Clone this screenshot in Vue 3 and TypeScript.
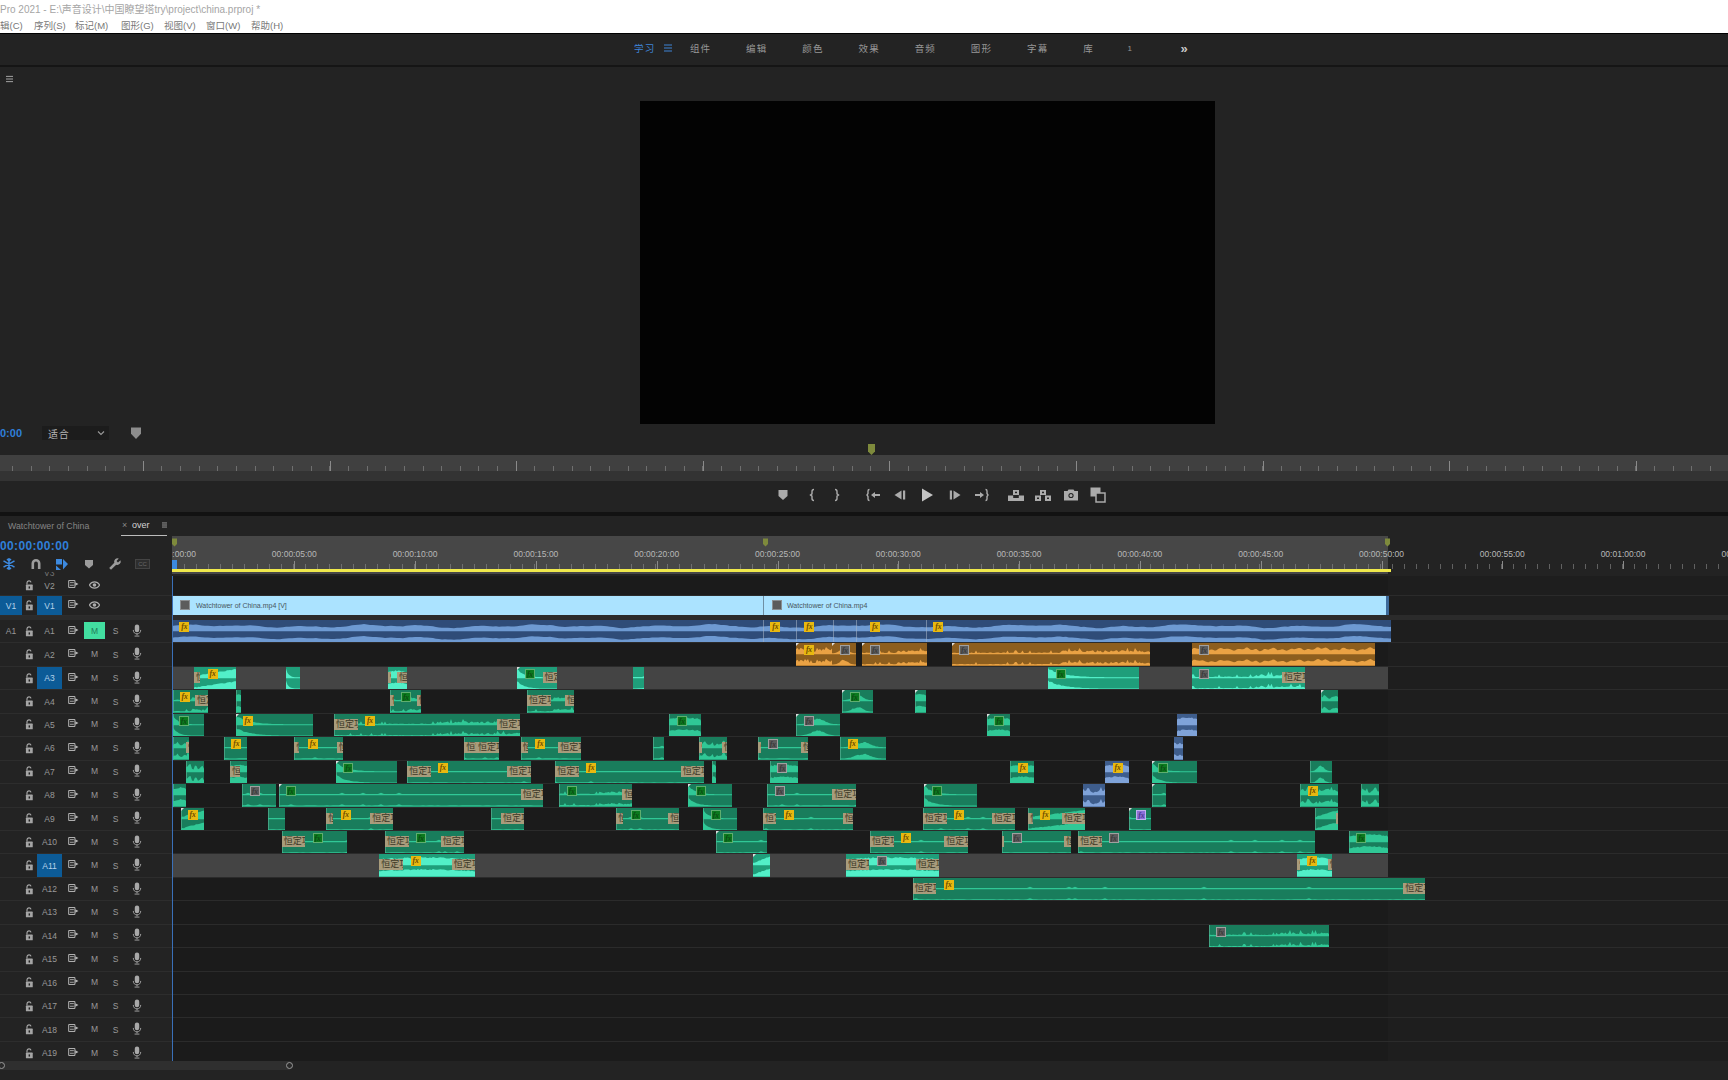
<script setup lang="ts">
type Clip = {
  s: number; e: number; k: string; badge: string; tl: number; tr: number; corner: boolean; col: string; d: string;
};

let seed = 7;
function rnd(): number {
  seed = (seed * 16807) % 2147483647;
  return (seed % 1000) / 1000;
}

let walk = 0.5;
function level(kind: string, t: number, n: number): number {
  switch (kind) {
    case 'd': return 0.08 + 0.9 * Math.exp(-6 * t) * (0.8 + 0.2 * n);
    case 'b': return 0.09 + 0.55 * Math.exp(-(((t - 0.5) / 0.22) ** 2)) * (0.7 + 0.3 * n);
    case 's': return 0.3 + 0.45 * n * n + 0.08 * Math.sin(t * 9);
    case 'h': return 0.5 + 0.12 * n + 0.15 * Math.sin(t * 3.14);
    case 'r': return 0.15 + 0.65 * t + 0.08 * n;
    case 'w':
      walk = walk * 0.7 + n * 0.3;
      return 0.36 + 0.22 * walk + 0.09 * Math.sin(t * 47) + 0.07 * Math.sin(t * 131);
    case 'n': return 0.09 + (t > 0.55 ? 0.22 : 0.05) * (0.4 + n) + (n > 0.9 ? 0.2 : 0);
    default: return 0.1 + (n > 0.93 ? 0.12 : 0.03 * n);
  }
}

function wave(w: number, kind: string): string {
  const step = kind === 'f' || w > 200 ? 3 : 1.5;
  const pts: number[] = [];
  for (let x = 0; x <= w + step; x += step) pts.push(Math.min(1, level(kind, x / w, rnd())));
  const chan = (base: number, scale: number): string =>
    `M0 ${base}` +
    pts.map((l, i) => `L${(i * step).toFixed(1)} ${(base - l * 10.5 * scale).toFixed(1)}`).join('') +
    `L${w + step} ${base}Z`;
  return chan(11, 1) + chan(22, 0.9);
}

function c(s: number, e: number, k = 'f', badge = '', tl = 0, tr = 0, corner = 0, col = ''): Clip {
  return { s, e, k, badge, tl, tr, corner: !!corner, col, d: wave(e - s, k) };
}

const laneClips: Record<string, Clip[]> = {
  A2: [
    c(796, 832, 's', 'y809', 0, 0, 1, 'o'), c(832, 856, 'b', 'k845', 0, 0, 1, 'o'),
    c(862, 927, 'n', 'k875', 0, 0, 1, 'o'), c(952, 1150, 'n', 'k964', 0, 0, 1, 'o'),
    c(1191.5, 1375, 'w', 'k1204', 0, 0, 0, 'o'),
  ],
  A3: [
    c(194, 236, 'r', 'y212.7', 6), c(285.7, 300, 'd'), c(388, 406.7, 'h', '', 3, 9.7),
    c(517, 557, 'd', 'g530', 0, 14.5, 1), c(632.7, 644), c(1048, 1138.7, 'd', 'g1060.7'),
    c(1191.5, 1305, 'n', 'k1204', 0, 23),
  ],
  A4: [
    c(172.5, 207.7, 'n', 'y184.7', 0, 12.7), c(235.7, 240.7, 'h'), c(390, 420.7, 'n', 'g406', 4, 4),
    c(527, 573.7, 'n', '', 23.7, 8.7), c(842, 873, 'b', 'g854.7', 0, 0, 1), c(915.3, 926, 'h', '', 0, 0, 1),
    c(1320.5, 1338, 's', '', 0, 0, 1),
  ],
  A5: [
    c(172.7, 203.7, 'd', 'g184'), c(235.7, 312.7, 'd', 'y247.7', 0, 0, 1), c(334, 520.3, 'n', 'y370', 23.7, 23),
    c(669.3, 700.7, 'h', 'g682'), c(796.3, 840, 'b', 'k809', 0, 0, 1), c(987, 1010, 'h', 'g999.3', 0, 0, 1),
    c(1177, 1197, 'h', '', 0, 0, 0, 'b'),
  ],
  A6: [
    c(172.7, 189, 's', '', 0, 3), c(223.7, 247.3, 'f', 'y236.3'), c(294.3, 343.3, 'f', 'y313', 5, 6.5),
    c(464.3, 499, 'f', '', 11.7, 23), c(520.7, 580.7, 'f', 'y540.3', 7.5, 22.4), c(653.3, 664.3),
    c(699.3, 727.3, 's', '', 3, 5.5), c(758.3, 808, 'f', 'k773', 3, 7), c(840, 886.3, 'b', 'y852.7'),
    c(1174, 1183.3, 's', '', 0, 0, 0, 'b'),
  ],
  A7: [
    c(186, 203.7, 's'), c(230, 247.3, 'h', '', 10), c(336, 397.3, 'd', 'g348.3', 0, 0, 1),
    c(407.3, 530.7, 'f', 'y443', 23.7, 23.4), c(555.3, 704, 'f', 'y591.3', 23.7, 23.3), c(712, 715.7, 'h'),
    c(769.7, 797.7, 'h', 'k782.3'), c(1010.3, 1034.3, 'h', 'y1023'), c(1105.3, 1128.7, 'h', 'y1117.7', 0, 0, 0, 'b'),
    c(1151.7, 1197, 'd', 'g1163.3', 0, 0, 1), c(1310, 1331.5, 'b'),
  ],
  A8: [
    c(172.7, 186.3, 'h'), c(242.3, 276, 'f', 'k255', 0, 0, 0), c(278.7, 543, 'f', 'g290.7', 0, 22.3, 1),
    c(559, 631.7, 'n', 'g571.7', 0, 9.4), c(688.3, 732, 'd', 'g700.7', 0, 0, 1), c(767.3, 855.7, 'f', 'k780', 0, 23.4),
    c(924.3, 976.7, 'd', 'g936.7', 0, 0, 1), c(1083.3, 1105, 's', '', 0, 0, 0, 'b'), c(1151.7, 1166, 'f', '', 0, 0, 1),
    c(1300, 1337.7, 's', 'y1312.7'), c(1361.3, 1379, 's'),
  ],
  A9: [
    c(180.7, 203.7, 'r', 'y192.7', 0, 0, 1), c(267.7, 285, 'f'), c(326.3, 393, 'f', 'y346', 7, 22.7),
    c(491, 524, 'f', '', 0, 23), c(616.3, 679.3, 'f', 'g636', 7, 11), c(703.3, 736.7, 'd', 'g716'),
    c(763, 853.3, 'f', 'y788.7', 13, 10.6), c(922.7, 1015, 'f', 'y958.7', 24, 23.3),
    c(1028.3, 1085.3, 'r', 'y1045.3', 5, 23.3), c(1129, 1151, 'f', 'p1141.3', 0, 0, 1), c(1315, 1337.7, 'r', '', 0, 2),
  ],
  A10: [
    c(281.7, 347, 'f', 'g317.7', 23.7), c(385, 464, 'f', 'g421', 24, 23.3), c(716, 767.3, 'f', 'g728.3', 0, 0, 1),
    c(870, 968, 'f', 'y906', 24, 23.7), c(1002.3, 1070.7, 'f', 'k1016.7', 2, 6.7), c(1078.3, 1315, 'f', 'k1113.7', 24),
    c(1349, 1387.7, 'h', 'g1361.3'),
  ],
  A11: [
    c(379.3, 475, 'h', 'y415.7', 24, 23.3), c(752.7, 770, 'r', '', 0, 0, 1), c(846, 939, 'h', 'k882', 23.3, 23.3),
    c(1297.3, 1332.3, 'h', 'y1312.3', 2.5, 4.5),
  ],
  A12: [c(912.7, 1425.3, 'f', 'y948.7', 23.3, 22)],
  A14: [c(1209, 1329, 'n', 'k1221')],
};

const audioNames: string[] = Array.from({ length: 19 }, (_, i) => `A${i + 1}`);
const selected = ['A3', 'A11'];

const a1 = { d: wave(1219, 'w'), dividers: [763, 796, 833, 856, 926], fx: [184.3, 775.3, 809.3, 875, 938.3] };

function px(x: number): string {
  return `${(x - 172).toFixed(1)}px`;
}
function clipBox(cl: Clip): Record<string, string> {
  return { left: px(cl.s), width: `${(cl.e - cl.s).toFixed(1)}px` };
}
function badgeKind(b: string): string {
  return `badge-${b[0]}`;
}
function badgeLeft(cl: Clip): string {
  return `${(Number(cl.badge.slice(1)) - cl.s - 5).toFixed(1)}px`;
}

const rulerLabels = Array.from({ length: 14 }, (_, i) => {
  const sec = i * 5;
  const mm = String(Math.floor(sec / 60)).padStart(2, '0');
  const ss = String(sec % 60).padStart(2, '0');
  return { text: `00:${mm}:${ss}:00`, x: 1.5 + i * 120.8 };
});

const menus = ['辑(C)', '序列(S)', '标记(M)', '图形(G)', '视图(V)', '窗口(W)', '帮助(H)'];
const tabs = ['组件', '编辑', '颜色', '效果', '音频', '图形', '字幕', '库'];
const transText = '恒定功率';
</script>

<template>
  <div class="app">
    <svg class="defs" aria-hidden="true">
      <symbol id="lock" viewBox="0 0 10 12">
        <path d="M2.2 5V3a2.3 2.3 0 0 1 4.5-.5" fill="none" stroke="currentColor" stroke-width="1.3" />
        <rect x="1" y="5" width="7.6" height="6.4" rx=".6" fill="currentColor" />
        <rect x="4" y="7" width="1.6" height="2.4" fill="#222" />
      </symbol>
      <symbol id="sync" viewBox="0 0 12 9">
        <path d="M.6.6h7v7.8h-7z" fill="none" stroke="currentColor" stroke-width="1.1" />
        <path d="M2 3h4.4M2 5.9h4.4" stroke="currentColor" stroke-width="1" />
        <path d="M8 2.4l3.6 2.1L8 6.6z" fill="currentColor" />
      </symbol>
      <symbol id="eye" viewBox="0 0 12 8">
        <path d="M.4 4C2 1.4 4 .6 6 .6S10 1.4 11.6 4C10 6.6 8 7.4 6 7.4S2 6.6.4 4z" fill="none" stroke="currentColor" stroke-width="1.2" />
        <circle cx="6" cy="4" r="2" fill="currentColor" />
      </symbol>
      <symbol id="mic" viewBox="0 0 10 14">
        <rect x="2.6" y="0.5" width="4.8" height="8.4" rx="2.4" fill="currentColor" />
        <path d="M1 6.4c0 2.8 1.8 4.2 4 4.2s4-1.4 4-4.2M5 10.6v1.600M2.400 13h5.200" fill="none" stroke="currentColor" stroke-width="1" />
      </symbol>
      <symbol id="shield" viewBox="0 0 12 14">
        <path d="M1 1.500h10v6.300L6 13 1 7.800z" fill="currentColor" />
      </symbol>
      <symbol id="burger" viewBox="0 0 8 8">
        <path d="M0 1h8M0 4h8M0 7h8" stroke="currentColor" stroke-width="1.1" />
      </symbol>
    </svg>

    <header class="titlebar">
      <div class="title">Pro 2021 - E:\声音设计\中国瞭望塔try\project\china.prproj *</div>
      <nav class="menu">
        <span v-for="m in menus" :key="m">{{ m }}</span>
      </nav>
    </header>

    <div class="workspace">
      <span class="tab learn">学习</span>
      <svg class="ws-burger"><use href="#burger" /></svg>
      <span v-for="t in tabs" :key="t" class="tab">{{ t }}</span>
      <span class="tab one">1</span>
      <span class="more">»</span>
    </div>
    <div class="sep-top"></div>

    <section class="monitor">
      <div class="mon-head">
        <svg class="hamb"><use href="#burger" /></svg>
      </div>
      <div class="video"></div>
      <div class="mon-bar">
        <span class="tc-small">0:00</span>
        <div class="fit">
          <span>适合</span>
          <svg width="8" height="6" viewBox="0 0 8 6"><path d="M1 1.500l3 3 3-3" fill="none" stroke="#999" stroke-width="1.1" /></svg>
        </div>
        <svg class="mon-shield"><use href="#shield" /></svg>
      </div>
      <div class="mark-strip">
        <svg class="mon-mark" viewBox="0 0 7 11"><path d="M0 0h7v7.500L3.500 11 0 7.500z" /></svg>
      </div>
      <div class="scrub"></div>
      <div class="scrub2"></div>
      <div class="controls">
        <div class="ctl-group g1">
          <svg viewBox="0 0 16 16"><path d="M3.500 3h9v6L8 13 3.500 9z" /></svg>
          <svg viewBox="0 0 16 16"><path class="ln" d="M10 2.500c-2 0-2 1-2 2v2.300L6.500 8 8 9.200v2.300c0 1 0 2 2 2" /></svg>
          <svg viewBox="0 0 16 16"><path class="ln" d="M6 2.500c2 0 2 1 2 2v2.300L9.500 8 8 9.200v2.300c0 1 0 2-2 2" /></svg>
        </div>
        <div class="ctl-group g2">
          <svg viewBox="0 0 16 16"><path class="ln" d="M4.500 2.500c-1.500 0-1.500.8-1.500 1.500v2.500L2 8l1 1.500V12c0 .7 0 1.500 1.500 1.500" /><path d="M6 8l4-3v2h5v2h-5v2z" /></svg>
          <svg viewBox="0 0 16 16"><path d="M9.500 3.500v9L2.500 8z" /><rect x="11" y="3.500" width="2.200" height="9" /></svg>
          <svg class="play" viewBox="0 0 16 16"><path d="M3 1.500L14 8 3 14.500z" /></svg>
          <svg viewBox="0 0 16 16"><rect x="2.800" y="3.500" width="2.200" height="9" /><path d="M6.500 3.500v9l7-4.500z" /></svg>
          <svg viewBox="0 0 16 16"><path d="M1 7h5V5l4 3-4 3V9H1z" /><path class="ln" d="M11.500 2.500c1.500 0 1.500.8 1.500 1.500v2.500L14 8l-1 1.500V12c0 .7 0 1.500-1.500 1.500" /></svg>
        </div>
        <div class="ctl-group g3">
          <svg viewBox="0 0 16 16"><path d="M0 8.500h5.200V11h5.600V8.500H16V14H0z" /><path d="M5 3h6v5H5z" /><rect x="7" y="4.700" width="2" height="1.500" fill="#232323" /></svg>
          <svg viewBox="0 0 16 16"><path d="M0 8.500h6v5.500H0zM10 8.500h6V14h-6z" /><rect x="2" y="10.500" width="2" height="1.500" fill="#232323" /><rect x="12" y="10.500" width="2" height="1.500" fill="#232323" /><path d="M5 3h6v5H5z" /><rect x="7" y="4.700" width="2" height="1.500" fill="#232323" /></svg>
          <svg viewBox="0 0 16 16"><path d="M1 4h3.500l1-1.500h5l1 1.500H15v9.500H1z" /><circle cx="8" cy="8.500" r="2.600" fill="#232323" /><circle cx="8" cy="8.500" r="1.500" /></svg>
          <svg viewBox="0 0 16 16"><rect x="0.500" y="0.500" width="10" height="9" /><rect class="ln2" x="6" y="6" width="9" height="9" /></svg>
        </div>
      </div>
    </section>
    <div class="sep-mid"></div>

    <section class="timeline">
      <div class="tl-tabs">
        <span class="seq-off">Watchtower of China</span>
        <div class="seq-on">
          <span class="close">×</span>
          <span>over</span>
          <svg class="tab-burger"><use href="#burger" /></svg>
        </div>
      </div>

      <div class="tl-head">
        <div class="head-left">
          <div class="timecode">00:00:00:00</div>
          <div class="tools">
            <svg class="blue" viewBox="0 0 14 14"><path d="M7 1v12M1.500 3.800l11 6.400M12.500 3.800l-11 6.400M5 2l2 2 2-2M5 12l2-2 2 2" fill="none" stroke="currentColor" stroke-width="1.500" /></svg>
            <svg viewBox="0 0 14 14"><path d="M2.500 12V6.500a4.500 4.500 0 0 1 9 0V12h-2.600V6.500a1.900 1.900 0 0 0-3.800 0V12z" /></svg>
            <svg class="blue" viewBox="0 0 14 14"><path d="M1 2h6v5.500H1zM8 2l5 5-5 5.500zM1 8.500l5 4.500H1z" /></svg>
            <svg viewBox="0 0 14 14"><path d="M3 3h8v5l-4 3.500L3 8z" /></svg>
            <svg viewBox="0 0 14 14"><path d="M12.500 3.200L10 5.500 8.500 4l2.300-2.500a3.400 3.400 0 0 0-4.500 4.300L1.200 11l1.800 1.800 5.200-5.100a3.400 3.400 0 0 0 4.300-4.500z" /></svg>
            <div class="cc">CC</div>
          </div>
          <div class="v3-peek"><span>V3</span></div>
        </div>
        <div class="ruler">
          <div class="ruler-range"></div>
          <div class="ruler-ticks"></div>
          <template v-for="l in rulerLabels" :key="l.text">
            <span class="r-label" :style="{ left: l.x + 'px' }">{{ l.text }}</span>
            <span class="r-major" :style="{ left: l.x + 'px' }"></span>
          </template>
          <svg class="r-mark m1" viewBox="0 0 7 11"><path d="M0 0h7v7.500L3.500 11 0 7.500z" /></svg>
          <svg class="r-mark m2" viewBox="0 0 7 11"><path d="M0 0h7v7.500L3.500 11 0 7.500z" /></svg>
          <svg class="r-mark m3" viewBox="0 0 7 11"><path d="M0 0h7v7.500L3.500 11 0 7.500z" /></svg>
          <div class="work-area"></div>
          <div class="play-head"></div>
        </div>
      </div>

      <div class="tracks">
        <!-- video tracks -->
        <div class="row row-v">
          <div class="t-head">
            <span class="patch"></span>
            <svg class="i-lock"><use href="#lock" /></svg>
            <span class="t-name">V2</span>
            <svg class="i-sync"><use href="#sync" /></svg>
            <span class="t-m"><svg class="i-eye"><use href="#eye" /></svg></span>
          </div>
          <div class="lane"></div>
        </div>
        <div class="row row-v">
          <div class="t-head">
            <span class="patch on">V1</span>
            <svg class="i-lock"><use href="#lock" /></svg>
            <span class="t-name on">V1</span>
            <svg class="i-sync"><use href="#sync" /></svg>
            <span class="t-m"><svg class="i-eye"><use href="#eye" /></svg></span>
          </div>
          <div class="lane">
            <div class="vclip first">
              <span class="thumb"></span><span class="v-text">Watchtower of China.mp4 [V]</span>
            </div>
            <div class="vclip second">
              <span class="thumb"></span><span class="v-text">Watchtower of China.mp4</span>
            </div>
          </div>
        </div>
        <div class="va-sep"></div>

        <!-- audio tracks -->
        <div v-for="name in audioNames" :key="name" class="row row-a">
          <div class="t-head">
            <span class="patch">{{ name === 'A1' ? 'A1' : '' }}</span>
            <svg class="i-lock"><use href="#lock" /></svg>
            <span class="t-name" :class="{ on: selected.includes(name) }">{{ name }}</span>
            <svg class="i-sync"><use href="#sync" /></svg>
            <span class="t-m" :class="{ active: name === 'A1' }">M</span>
            <span class="t-s">S</span>
            <span class="t-mic"><svg class="i-mic"><use href="#mic" /></svg></span>
          </div>
          <div class="lane" :class="{ 'lane-sel': selected.includes(name) }">
            <template v-if="name === 'A1'">
              <div class="clip a1">
                <svg class="wave" :viewBox="`0 0 1219 22`" preserveAspectRatio="none"><path :d="a1.d" /></svg>
                <span v-for="d in a1.dividers" :key="d" class="divider" :style="{ left: (d - 172) + 'px' }"></span>
                <span v-for="f in a1.fx" :key="f" class="badge badge-y" :style="{ left: (f - 177) + 'px' }">fx</span>
              </div>
            </template>
            <div
              v-for="cl in laneClips[name] || []"
              :key="cl.s"
              class="clip"
              :class="[cl.col || 'g', { sel: selected.includes(name) }]"
              :style="clipBox(cl)"
            >
              <svg class="wave" :viewBox="`0 0 ${cl.e - cl.s} 22`" preserveAspectRatio="none"><path :d="cl.d" /></svg>
              <span v-if="cl.corner" class="corner"></span>
              <span v-if="cl.tl" class="trans tl" :style="{ width: cl.tl + 'px' }">{{ transText }}</span>
              <span v-if="cl.tr" class="trans tr" :style="{ width: cl.tr + 'px' }">{{ transText }}</span>
              <span v-if="cl.badge" class="badge" :class="badgeKind(cl.badge)" :style="{ left: badgeLeft(cl) }">fx</span>
            </div>
          </div>
        </div>
        <div class="cursor"></div>
      </div>

      <div class="scrollbar">
        <div class="scroll-thumb">
          <span class="knob left"></span>
          <span class="knob right"></span>
        </div>
      </div>
    </section>
  </div>
</template>

<style scoped>
.app {
  width: 1728px;
  height: 1080px;
  overflow: hidden;
  background: #232323;
  color: #9a9a9a;
  font-family: "Liberation Sans", "Noto Sans CJK SC", sans-serif;
  display: flex;
  flex-direction: column;
}
.defs { position: absolute; width: 0; height: 0; }

/* title */
.titlebar { height: 33px; flex: none; background: #fff; color: #8c8c8c; font-size: 9.5px; overflow: hidden; }
.title { height: 18px; line-height: 19px; color: #a5a5a5; font-size: 10px; }
.menu { display: flex; height: 15px; line-height: 15px; gap: 10px; }
.menu span { flex: none; color: #777; white-space: nowrap; }
.menu span:nth-child(1) { width: 24px; }
.menu span:nth-child(2) { width: 31px; }
.menu span:nth-child(3) { width: 36px; }
.menu span:nth-child(4) { width: 33px; }
.menu span:nth-child(5) { width: 32px; }
.menu span:nth-child(6) { width: 35px; }

/* workspace */
.workspace {
  height: 28px;
  flex: none;
  border-top: 1px solid #000;
  display: flex;
  align-items: center;
  padding: 0 0 3px 634px;
  gap: 36.2px;
  font-size: 9.5px;
  box-sizing: content-box;
}
.tab { letter-spacing: 1.2px; color: #979797; width: 20px; white-space: nowrap; }
.tab.learn { color: #3f84d6; margin-right: -26px; }
.ws-burger { width: 8px; height: 8px; color: #3f84d6; margin-right: -18.5px; }
.tab.one { font-size: 8px; width: 6px; margin-left: -12px; }
.more { color: #c8c8c8; font-size: 13px; font-weight: 700; margin-left: 11px; line-height: 1; }
.sep-top { height: 2px; flex: none; background: #151515; }

/* monitor */
.monitor { height: 445px; flex: none; display: flex; flex-direction: column; }
.mon-head { height: 34px; flex: none; display: flex; align-items: center; padding: 0 0 10px 6px; box-sizing: border-box; }
.hamb { width: 7px; height: 8px; color: #aaa; }
.video { width: 575px; height: 323px; flex: none; margin-left: 640px; background: #030303; }
.mon-bar { height: 20px; flex: none; display: flex; align-items: center; padding-bottom: 2px; box-sizing: border-box; }
.tc-small { width: 42px; color: #2f7fd8; font-size: 11px; font-weight: 700; }
.fit {
  width: 67px;
  height: 14px;
  box-sizing: border-box;
  padding: 0 4px 0 6px;
  background: #1c1c1c;
  display: flex;
  align-items: center;
  justify-content: space-between;
  color: #b5b5b5;
  font-size: 10px;
  letter-spacing: .8px;
}
.mon-shield { width: 12px; height: 14px; margin-left: 21px; color: #8c8c8c; }
.mark-strip { height: 11px; flex: none; padding-left: 868px; display: flex; }
.mon-mark { width: 7px; height: 11px; fill: #7e8a3c; }
.scrub {
  height: 16px;
  flex: none;
  background-color: #404040;
  background-image:
    repeating-linear-gradient(90deg, #8a8a8a 0 1px, transparent 1px 186.6px),
    repeating-linear-gradient(90deg, #6f6f6f 0 1px, transparent 1px 18.66px);
  background-size: 100% 10px, 100% 5px;
  background-repeat: no-repeat;
  background-position: 142.7px 100%, 11.7px 100%;
}
.scrub2 { height: 10px; flex: none; background: #333; }
.controls { height: 31px; flex: none; display: flex; align-items: center; padding: 0 0 3px 775px; box-sizing: border-box; color: #b0b0b0; }
.ctl-group { display: flex; align-items: center; }
.ctl-group svg { width: 16px; height: 16px; fill: #ababab; flex: none; }
.ctl-group svg.play { fill: #c4c4c4; }
.ln { fill: none; stroke: #ababab; stroke-width: 1.4; }
.ln2 { fill: #232323; stroke: #ababab; stroke-width: 1.5; }
.g1 { gap: 9px; }
.g1 svg:first-child { margin-right: 4px; }
.g2 { gap: 11.2px; margin-left: 20px; }
.g3 { gap: 11.5px; margin-left: 18px; }

.sep-mid { height: 4px; flex: none; background: #121212; }

/* timeline */
.timeline { flex: 1; display: flex; flex-direction: column; min-height: 0; }
.tl-tabs { height: 20px; flex: none; display: flex; align-items: center; font-size: 8.8px; padding-left: 8px; }
.seq-off { width: 113px; color: #858585; white-space: nowrap; padding-bottom: 1px; }
.seq-on {
  width: 46px;
  height: 18px;
  display: flex;
  align-items: center;
  color: #d5d5d5;
  border-bottom: 1.5px solid #bcbcbc;
  box-sizing: content-box;
  font-size: 9px;
  padding-bottom: 1px;
}
.close { color: #888; width: 14px; padding-left: 1px; box-sizing: border-box; }
.tab-burger { width: 7px; height: 8px; color: #bbb; margin-left: 12px; }
.tl-head { height: 40px; flex: none; display: flex; }
.head-left { width: 172px; flex: none; display: flex; flex-direction: column; }
.timecode { height: 19px; line-height: 20px; color: #2f7fd8; font-size: 12px; font-weight: 700; letter-spacing: .35px; flex: none; }
.tools { height: 17px; flex: none; display: flex; align-items: center; padding-left: 2px; gap: 12.6px; color: #9c9c9c; fill: #9c9c9c; }
.tools svg { width: 14px; height: 14px; flex: none; fill: currentColor; }
.tools .blue { color: #3d8ae0; }
.cc { width: 13px; height: 8px; border: 1px solid #444; color: #6a6a6a; background: #2e2e2e; font-size: 6px; line-height: 8px; text-align: center; flex: none; }
.v3-peek { height: 4px; flex: none; overflow: hidden; padding-left: 44px; font-size: 8.5px; line-height: 6px; color: #777; display: flex; align-items: flex-end; }
.ruler { flex: 1; position: relative; overflow: hidden; background: #232323; }
.ruler-range { position: absolute; left: 0; top: 0; width: 1216px; height: 38px; background: #474747; }
.ruler-ticks {
  position: absolute;
  left: 0;
  right: 0;
  top: 28px;
  height: 5px;
  background: repeating-linear-gradient(90deg, #8a8a8a 0 1px, transparent 1px 12.08px);
  opacity: .6;
}
.r-label { position: absolute; top: 13px; transform: translateX(-50%); font-size: 8.5px; line-height: 11px; color: #b8b8b8; white-space: nowrap; }
.r-major { position: absolute; top: 25px; width: 1px; height: 8px; background: #8a8a8a; }
.r-mark { position: absolute; top: 1px; width: 5px; height: 11px; fill: #7e8a3c; }
.m1 { left: 0; }
.m2 { left: 591px; }
.m3 { left: 1213px; }
.work-area { position: absolute; left: 0; top: 33px; width: 1219px; height: 2.5px; background: #efe84c; }
.play-head { position: absolute; left: 0; top: 24px; width: 5px; height: 9px; background: #3c8ade; }

.tracks { height: 485px; flex: none; position: relative; overflow: hidden; }
.row { display: flex; box-sizing: border-box; }
.row-v { height: 20px; }
.row-a { height: 23.45px; }
.va-sep { height: 4px; background: #2b2b2b; }
.t-head {
  width: 172px;
  flex: none;
  display: flex;
  align-items: center;
  font-size: 8.5px;
  border-bottom: 1px solid #2d2d2d;
  box-sizing: border-box;
  color: #999;
  background: #232323;
}
.patch { width: 22px; height: 100%; flex: none; display: flex; align-items: center; justify-content: center; }
.patch.on { background: #0c5b97; color: #b5d3ea; }
.i-lock { width: 9px; height: 11px; margin: 0 3px 0 3px; flex: none; color: #a5a5a5; }
.t-name { width: 25px; height: 100%; flex: none; display: flex; align-items: center; justify-content: center; }
.t-name.on { background: #0c5b97; color: #b5d3ea; }
.i-sync { width: 11px; height: 8px; margin: -3px 5px 0 6px; flex: none; color: #b8b8b8; }
.t-m { width: 21px; flex: none; text-align: center; align-self: stretch; display: flex; align-items: center; justify-content: center; margin-bottom: 1px; }
.t-m.active { background: #42dea0; color: #237a58; margin: 2px 0 3px; }
.i-eye { width: 11px; height: 8px; color: #aaa; }
.t-s { width: 21px; flex: none; text-align: center; }
.t-mic { width: 21px; flex: none; display: flex; justify-content: center; margin-top: -2px; }
.i-mic { width: 10px; height: 13px; color: #a8a8a8; }

.lane {
  flex: 1;
  position: relative;
  border-bottom: 1px solid #2b2b2b;
  box-sizing: border-box;
  background: linear-gradient(90deg, #1b1b1b 1216px, #1e1e1e 1216px);
  overflow: hidden;
}
.lane-sel { background: linear-gradient(90deg, #444 1216px, #1e1e1e 1216px); }
.vclip {
  position: absolute;
  top: 0;
  bottom: 0;
  background: #abe3ff;
  display: flex;
  align-items: center;
  color: #47555c;
  font-size: 7px;
  white-space: nowrap;
  padding-bottom: 1px;
  box-sizing: border-box;
}
.first { left: 0; width: 591px; padding-left: 8px; }
.second { left: 591px; width: 626px; padding-left: 8px; border-left: 1px solid #6f8fa3; border-right: 3px solid #3d6a9a; }
.second .thumb { margin-right: 5px; }
.thumb { width: 8px; height: 8px; background: #5c5c5c; border: 1px solid #8a8f92; margin-right: 6px; flex: none; }

.clip { position: absolute; top: 0; bottom: 0; overflow: hidden; }
.wave { position: absolute; left: 0; top: 0; width: 100%; height: 100%; }
.g { background: #197d5c; box-shadow: inset 1px 0 rgba(150, 230, 200, .35); }
.g .wave { fill: #30c896; }
.g.sel { background: #1f9e7a; box-shadow: none; }
.g.sel .wave { fill: #52efc8; }
.o { background: #8d5e1e; }
.o .wave { fill: #eaa244; }
.b { background: #3e5d8c; }
.b .wave { fill: #7fa3d9; }
.a1 { left: 0; width: 1219px; background: #2f4c78; }
.a1 .wave { fill: #6e9ad2; }
.divider { position: absolute; top: 0; bottom: 0; width: 1px; background: #a8b6c9; opacity: .55; }
.corner { position: absolute; left: 0; top: 0; width: 0; height: 0; border-top: 3px solid #ddd; border-right: 3px solid transparent; }
.badge {
  position: absolute;
  top: 2px;
  width: 10px;
  height: 10px;
  box-sizing: border-box;
  font-size: 7.5px;
  font-weight: 700;
  line-height: 9px;
  text-align: center;
  font-style: italic;
  font-family: "Liberation Serif", serif;
  overflow: hidden;
}
.badge-y { background: #e8b810; color: #6b4a00; }
.badge-g { background: #0b7a1e; color: #0b4a14; border: 1px solid #5fae6f; }
.badge-k { background: #5c5c5c; color: #3a3a3a; border: 1px solid #a0a0a0; }
.badge-p { background: #8d6fd8; color: #4a3a90; border: 1px solid #c0b0ee; }
.trans {
  position: absolute;
  top: 5px;
  height: 11px;
  line-height: 11px;
  background: #a89c7c;
  color: #3c3826;
  font-size: 9px;
  padding-left: 2px;
  box-sizing: border-box;
  overflow: hidden;
  white-space: nowrap;
}
.tl { left: 0; }
.tr { right: 0; }
.cursor { position: absolute; left: 172px; top: 0; bottom: 0; width: 1px; background: #3a70b8; }

.scrollbar { height: 19px; flex: none; }
.scroll-thumb { width: 290px; height: 9px; background: #2f2f2f; position: relative; }
.knob { position: absolute; top: 1px; width: 7px; height: 7px; border-radius: 50%; border: 1.5px solid #9a9a9a; background: #2a2a2a; box-sizing: border-box; }
.knob.left { left: -2px; }
.knob.right { left: 286px; }
</style>

<style>
html, body { margin: 0; background: #232323; overflow: hidden; }
</style>
